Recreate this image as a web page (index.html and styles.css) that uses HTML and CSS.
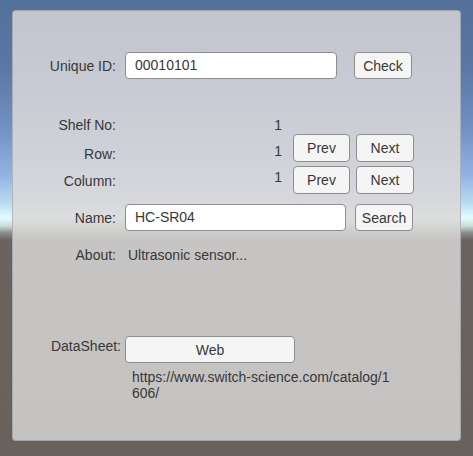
FILE: index.html
```html
<!DOCTYPE html>
<html>
<head>
    <title>Parts Finder</title>
    <link rel="stylesheet" href="styles.css">
</head>
<body>
    <div class="panel">
        <div class="row row-id">
            <span class="lbl">Unique ID:</span>
            <div class="field field-id">00010101</div>
            <button type="button" class="btn btn-check">Check</button>
        </div>

        <div class="row row-shelf">
            <span class="lbl">Shelf No:</span>
            <span class="val">1</span>
        </div>

        <div class="row row-step row-row">
            <span class="lbl">Row:</span>
            <span class="val">1</span>
            <button type="button" class="btn btn-prev">Prev</button>
            <button type="button" class="btn btn-next">Next</button>
        </div>

        <div class="row row-step row-col">
            <span class="lbl">Column:</span>
            <span class="val">1</span>
            <button type="button" class="btn btn-prev">Prev</button>
            <button type="button" class="btn btn-next">Next</button>
        </div>

        <div class="row row-name">
            <span class="lbl">Name:</span>
            <div class="field field-name">HC-SR04</div>
            <button type="button" class="btn btn-search">Search</button>
        </div>

        <div class="row row-about">
            <span class="lbl">About:</span>
            <span class="about">Ultrasonic sensor...</span>
        </div>

        <div class="row row-sheet">
            <span class="lbl lbl-sheet">DataSheet:</span>
            <button type="button" class="btn btn-web">Web</button>
        </div>
        <div class="url">https://www.switch-science.com/catalog/1606/</div>
    </div>
</body>
</html>
```

FILE: styles.css
```css
html, body {margin: 0; height: 100%;}
body {
    font-family: "Liberation Sans", Arial, sans-serif;
    font-size: 14px;
    color: #383838;
    padding: 10px 12px 0 12px;
    box-sizing: border-box;
    background: linear-gradient(to bottom,
        #53709b 0px, #5b78a5 70px, #7292c4 130px, #92b3e2 175px,
        #b9dcf3 203px, #e4fcfd 218px, #c9dcdc 226px, #8c8c88 233px,
        #6b645e 240px, #69625c 456px);
}
.panel {
    width: 449px;
    height: 431px;
    box-sizing: border-box;
    border: 1px solid rgba(70, 80, 95, 0.25);
    border-radius: 4px;
    background: linear-gradient(to bottom,
        #c2c5cd 0px, #c8cbd3 80px, #ced1d7 140px, #d6d8dc 190px,
        #dbdddd 208px, #d2d1cf 218px, #c6c5c3 228px, #c4c3c1 431px);
}
.row {display: flex; align-items: center;}
.lbl {width: 103px; text-align: right; line-height: 16px; flex: none;}
.val {width: 157px; margin-left: 9px; text-align: right; line-height: 16px;}

.field {
    box-sizing: border-box;
    height: 27px;
    line-height: 25px;
    padding-left: 9px;
    background: #fff;
    border: 1px solid #8e8e8e;
    border-radius: 4px;
    margin-left: 9px;
}
.btn {
    box-sizing: border-box;
    height: 27px;
    padding: 0;
    font-family: inherit;
    font-size: 14px;
    color: #383838;
    background: #f5f5f5;
    border: 1px solid #8e8e8e;
    border-radius: 4px;
}

.row-id {margin-top: 41px; height: 27px;}
.field-id {width: 212px;}
.btn-check {width: 58px; margin-left: 17px;}

.row-shelf {margin-top: 37px; height: 18px;}

.row-step {height: 28px; align-items: flex-start;}
.row-step .btn {height: 28px; width: 57px;}
.row-step .btn-prev {margin-left: 11px;}
.row-step .btn-next {margin-left: 6px; width: 58px;}
.row-row .lbl {margin-top: 12px;}
.row-row .val {margin-top: 9px;}
.row-col {margin-top: 4px;}
.row-col .lbl {margin-top: 7px;}
.row-col .val {margin-top: 3px;}

.row-name {margin-top: 10px; height: 27px;}
.field-name {width: 221px;}
.btn-search {width: 58px; margin-left: 9px;}

.row-about {margin-top: 15px; height: 18px;}
.about {margin-left: 12px; line-height: 16px;}

.row-sheet {margin-top: 72px; height: 27px; align-items: flex-start;}
.lbl-sheet {width: 108px; margin-top: 2px;}
.btn-web {width: 170px; margin-left: 4px;}

.url {
    width: 262px;
    margin: 6px 0 0 119px;
    line-height: 16px;
    word-break: break-all;
}
```
